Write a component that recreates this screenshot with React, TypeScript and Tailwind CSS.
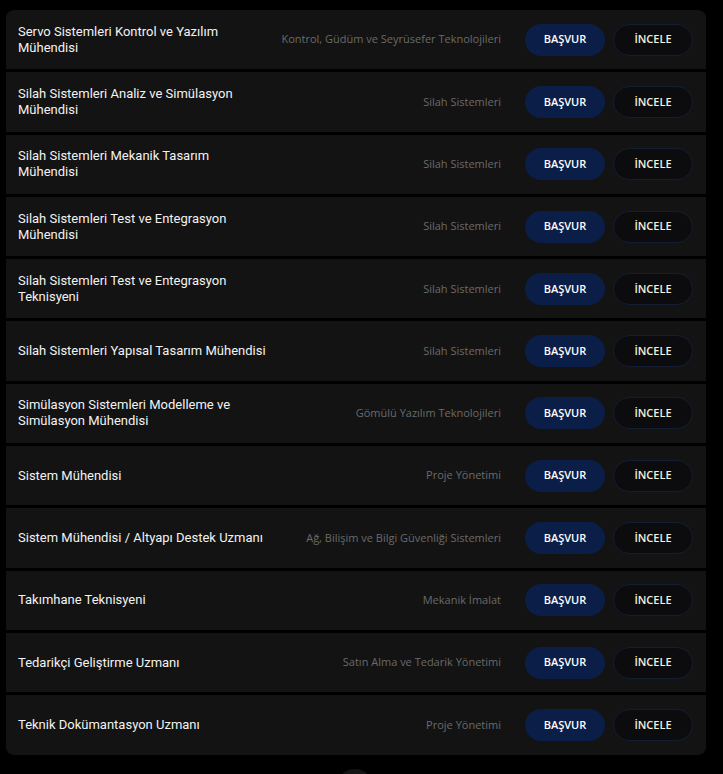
import React from "react";

const jobs = [
  { title: "Servo Sistemleri Kontrol ve Yazılım Mühendisi", dept: "Kontrol, Güdüm ve Seyrüsefer Teknolojileri" },
  { title: "Silah Sistemleri Analiz ve Simülasyon Mühendisi", dept: "Silah Sistemleri" },
  { title: "Silah Sistemleri Mekanik Tasarım Mühendisi", dept: "Silah Sistemleri" },
  { title: "Silah Sistemleri Test ve Entegrasyon Mühendisi", dept: "Silah Sistemleri" },
  { title: "Silah Sistemleri Test ve Entegrasyon Teknisyeni", dept: "Silah Sistemleri" },
  { title: "Silah Sistemleri Yapısal Tasarım Mühendisi", dept: "Silah Sistemleri" },
  { title: "Simülasyon Sistemleri Modelleme ve Simülasyon Mühendisi", dept: "Gömülü Yazılım Teknolojileri" },
  { title: "Sistem Mühendisi", dept: "Proje Yönetimi" },
  { title: "Sistem Mühendisi / Altyapı Destek Uzmanı", dept: "Ağ, Bilişim ve Bilgi Güvenliği Sistemleri" },
  { title: "Takımhane Teknisyeni", dept: "Mekanik İmalat" },
  { title: "Tedarikçi Geliştirme Uzmanı", dept: "Satın Alma ve Tedarik Yönetimi" },
  { title: "Teknik Dokümantasyon Uzmanı", dept: "Proje Yönetimi" },
];

const App = () => {
  return (
    <div className="min-h-[774px] bg-black pt-[10px] pl-[6px] pr-[17px] overflow-hidden">
      <div className="flex flex-col gap-[3px] rounded-lg overflow-hidden">
        {jobs.map((job, i) => (
          <div
            key={i}
            className="h-[59.3px] flex items-center bg-[#131313] pl-3 pr-[13px]"
          >
            <div className="w-[250px] text-[13px] leading-[16px] font-normal text-[#f2f2f2] font-['Roboto',sans-serif]">
              {job.title}
            </div>
            <div className="flex-1 text-right pr-6 text-[11px] text-[#6a6a6a] font-['Open_Sans',sans-serif] whitespace-nowrap">
              {job.dept}
            </div>
            <button className="w-20 h-8 rounded-full bg-[#0b1e47] text-white text-[11px] font-semibold font-['Open_Sans',sans-serif]">
              BAŞVUR
            </button>
            <button className="ml-2 w-20 h-8 rounded-full border border-[#141e33] bg-[#0c0c0e] text-[#f4f1dc] text-[11px] font-semibold font-['Open_Sans',sans-serif]">
              İNCELE
            </button>
          </div>
        ))}
      </div>
      <div className="flex justify-center pr-[2px] mt-[14px]">
        <div className="w-9 h-9 rounded-full bg-[#141414]" />
      </div>
    </div>
  );
};

export default App;
